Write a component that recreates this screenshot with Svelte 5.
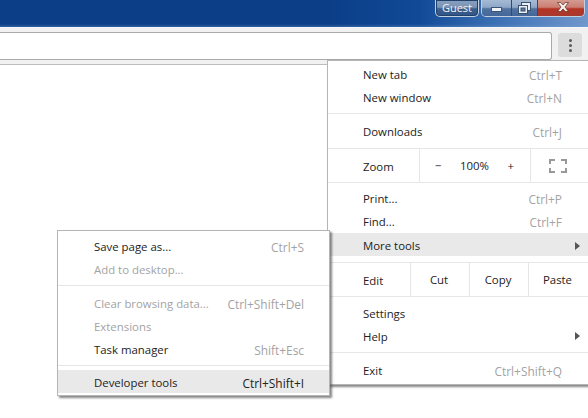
<script>
  const mainMenu = [
    [{ label: 'New tab', key: 'Ctrl+T' }, { label: 'New window', key: 'Ctrl+N' }],
    [{ label: 'Downloads', key: 'Ctrl+J' }]
  ];
  const pageItems = [
    { label: 'Print...', key: 'Ctrl+P' },
    { label: 'Find...', key: 'Ctrl+F' },
    { label: 'More tools', arrow: true, active: true }
  ];
  const moreTools = [
    [
      { label: 'Save page as...', key: 'Ctrl+S' },
      { label: 'Add to desktop...', disabled: true }
    ],
    [
      { label: 'Clear browsing data...', key: 'Ctrl+Shift+Del', disabled: true },
      { label: 'Extensions', disabled: true },
      { label: 'Task manager', key: 'Shift+Esc' }
    ],
    [{ label: 'Developer tools', key: 'Ctrl+Shift+I', active: true }]
  ];
</script>

{#snippet row(item)}
  <div class="row" class:active={item.active} class:disabled={item.disabled}>
    <span>{item.label}</span>
    {#if item.key}<span class="key" class:dark={item.active}>{item.key}</span>{/if}
    {#if item.arrow}<span class="arrow"></span>{/if}
  </div>
{/snippet}

<div class="window">
  <header class="titlebar">
    <div class="guest">Guest</div>
    <div class="controls">
      <div class="ctl min"><span class="min-bar"></span></div>
      <div class="ctl restore">
        <svg width="13" height="12" viewBox="0 0 13 12">
          <rect x="3.500" y=".5" width="9" height="8" fill="#e8eef5" stroke="#39506e" />
          <rect x=".5" y="3.500" width="9" height="8" fill="#e8eef5" stroke="#39506e" />
          <rect x="3" y="6" width="4" height="3" fill="#5b7ba6" stroke="#39506e" />
        </svg>
      </div>
      <div class="ctl close">
        <svg width="12" height="10" viewBox="0 0 12 10">
          <path d="M.5.5h3.200L6 3l2.300-2.500h3.200L8 5l3.500 4.500H8.300L6 7 3.700 9.500H.5L4 5z" fill="#f4eeea" stroke="#5e2a24" stroke-width=".7" />
        </svg>
      </div>
    </div>
  </header>

  <div class="toolbar">
    <div class="omnibox"></div>
    <div class="kebab"><i></i><i></i><i></i></div>
  </div>

  <main class="content"></main>

  <nav class="menu main-menu">
    {#each mainMenu as group, i}
      {#each group as item}{@render row(item)}{/each}
      <div class="sep" class:tail={i === 1}></div>
    {/each}
    <div class="cells zoom">
      <div class="cell-label">Zoom</div>
      <div class="stepper">
        <span>−</span><span>100%</span><span>+</span>
      </div>
      <div class="full">
        <svg width="18" height="14" viewBox="0 0 18 14">
          <path d="M1 5V1h5M12 1h5v4M1 9v4h5M12 13h5V9" fill="none" stroke="#999" stroke-width="2" />
        </svg>
      </div>
    </div>
    <div class="group">
      {#each pageItems as item}{@render row(item)}{/each}
    </div>
    <div class="sep after-active"></div>
    <div class="cells edit">
      <div class="cell-label">Edit</div>
      <div class="cell">Cut</div>
      <div class="cell">Copy</div>
      <div class="cell">Paste</div>
    </div>
    <div class="group">
      {@render row({ label: 'Settings' })}
      {@render row({ label: 'Help', arrow: true })}
    </div>
    <div class="sep"></div>
    {@render row({ label: 'Exit', key: 'Ctrl+Shift+Q' })}
  </nav>

  <nav class="menu sub-menu">
    {#each moreTools as group, i}
      {#each group as item}{@render row(item)}{/each}
      {#if i < moreTools.length - 1}<div class="sep" class:tight={i === 1}></div>{/if}
    {/each}
  </nav>
</div>

<style>
  :global(body) { margin: 0; }

  .window {
    position: relative;
    width: 588px;
    height: 418px;
    overflow: hidden;
    background: #fff;
    font-family: "Open Sans", "Noto Sans", sans-serif;
    font-size: 11.4px;
    color: #222;
    display: flex;
    flex-direction: column;
  }

  .titlebar {
    height: 27px;
    box-sizing: border-box;
    padding-right: 3px;
    display: flex;
    justify-content: flex-end;
    align-items: flex-start;
    gap: 2px;
    background:
      linear-gradient(180deg, rgba(255,255,255,0) 0, rgba(255,255,255,0) 24px, rgba(120,160,215,.35) 27px),
      linear-gradient(90deg, #0b3e87 0, #0b3e87 330px, #114a97 420px, #3e72b5 500px, #7198cc 588px);
  }
  .guest {
    width: 44px;
    height: 17px;
    box-sizing: border-box;
    border: 1px solid #c3d0e0;
    border-top: 0;
    border-radius: 0 0 5px 5px;
    background: linear-gradient(180deg, #88a0bf 0, #7c93b2 45%, #3e5f8b 55%, #2f5488 100%);
    box-shadow: inset 0 0 0 1px #22406c;
    color: #f2f5f8;
    font-size: 11px;
    line-height: 15px;
    text-align: center;
  }
  .controls {
    display: flex;
    height: 17px;
    border: 1px solid #c3d0e0;
    border-top: 0;
    border-radius: 0 0 5px 5px;
    box-sizing: border-box;
    overflow: hidden;
  }
  .ctl {
    height: 16px;
    display: flex;
    align-items: center;
    justify-content: center;
  }
  .min, .restore {
    background: linear-gradient(180deg, #a6bad4 0, #8fa8c8 45%, #50729f 55%, #43679a 100%);
    border-right: 1px solid #2f4a70;
  }
  .min { width: 29px; }
  .restore { width: 25px; }
  .restore svg { margin-top: -1px; }
  .min-bar {
    width: 11px;
    height: 5px;
    margin-top: 3px;
    background: #f0f3f7;
    border: 1px solid #3c5478;
    box-sizing: border-box;
  }
  .close {
    width: 46px;
    background: linear-gradient(180deg, #d59a90 0, #cb7f73 45%, #b53526 55%, #a8392f 100%);
  }
  .close svg { margin-top: -3px; margin-left: 3px; }

  .toolbar {
    height: 37px;
    box-sizing: border-box;
    background: #f1f1f1;
    border-top: 1px solid #f7f7f7;
    display: flex;
    padding: 4px 6px 0 0;
    gap: 6px;
  }
  .omnibox {
    flex: 1;
    height: 28px;
    box-sizing: border-box;
    background: #fff;
    border: 1px solid #a9a9a9;
    border-left: 0;
    border-radius: 0 3px 3px 0;
  }
  .kebab {
    width: 24px;
    height: 24px;
    margin-top: 1px;
    border-radius: 3px;
    background: #dcdcdc;
    display: flex;
    flex-direction: column;
    align-items: center;
    justify-content: center;
    gap: 2px;
  }
  .kebab i {
    width: 3px;
    height: 3px;
    background: #5a5a5a;
    border-radius: 50%;
  }

  .content {
    flex: 1;
    border-top: 1px solid #bdbdbd;
  }

  .menu {
    position: absolute;
    box-sizing: border-box;
    background: #fff;
    border: 1px solid #b5b5b5;
    display: flex;
    flex-direction: column;
    box-shadow: 2px 2px 2px rgba(70, 70, 70, .65);
  }
  .main-menu {
    left: 327px;
    top: 60px;
    width: 280px;
    height: 325px;
    padding-top: 2px;
  }
  .sub-menu {
    left: 57px;
    top: 230px;
    width: 273px;
    height: 166px;
    padding-top: 4px;
  }

  .row {
    height: 23px;
    flex: none;
    box-sizing: border-box;
    padding-left: 35px;
    display: flex;
    align-items: center;
    justify-content: space-between;
    position: relative;
  }
  .main-menu .row { padding-right: 44px; }
  .sub-menu .row { padding: 0 25px 0 36px; }
  .row.active {
    background: #e9e9e9;
    padding-top: 2px;
  }
  .disabled { color: #a3a3a3; }
  .key { color: #a3a3a3; font-size: 11.9px; }
  .key.dark { color: #222; }
  .arrow {
    position: absolute;
    left: 247px;
    top: 7px;
    border-left: 5px solid #555;
    border-top: 4px solid transparent;
    border-bottom: 4px solid transparent;
  }
  .active .arrow { top: 9px; }

  .sep {
    flex: none;
    height: 1px;
    margin: 4px 0 6px;
    background: #e6e6e6;
  }
  .sep.tail { margin-top: 5px; }
  .sep.after-active { margin-top: 6px; }
  .sep.tight { margin-bottom: 4px; }

  .cells {
    flex: none;
    display: grid;
    border-bottom: 1px solid #e6e6e6;
    height: 34px;
    box-sizing: border-box;
    margin-top: -6px;
  }
  .cells > div {
    display: flex;
    align-items: center;
    justify-content: center;
  }
  .cells .cell-label {
    justify-content: flex-start;
    padding: 2px 0 0 35px;
  }
  .zoom {
    grid-template-columns: 91px 112px 1fr;
    margin-bottom: 4px;
  }
  .edit {
    grid-template-columns: 82px 59px 59px 60px;
    margin-bottom: 5px;
  }
  .cells .stepper {
    border-left: 1px solid #e6e6e6;
    border-right: 1px solid #e6e6e6;
    justify-content: space-between;
    padding: 0 16px 0 15px;
  }
  .cells .full {
    justify-content: flex-start;
    padding: 1px 0 0 18px;
  }
  .cells .cell {
    border-left: 1px solid #e6e6e6;
    padding-right: 2px;
  }

  .group { display: flex; flex-direction: column; }
</style>
